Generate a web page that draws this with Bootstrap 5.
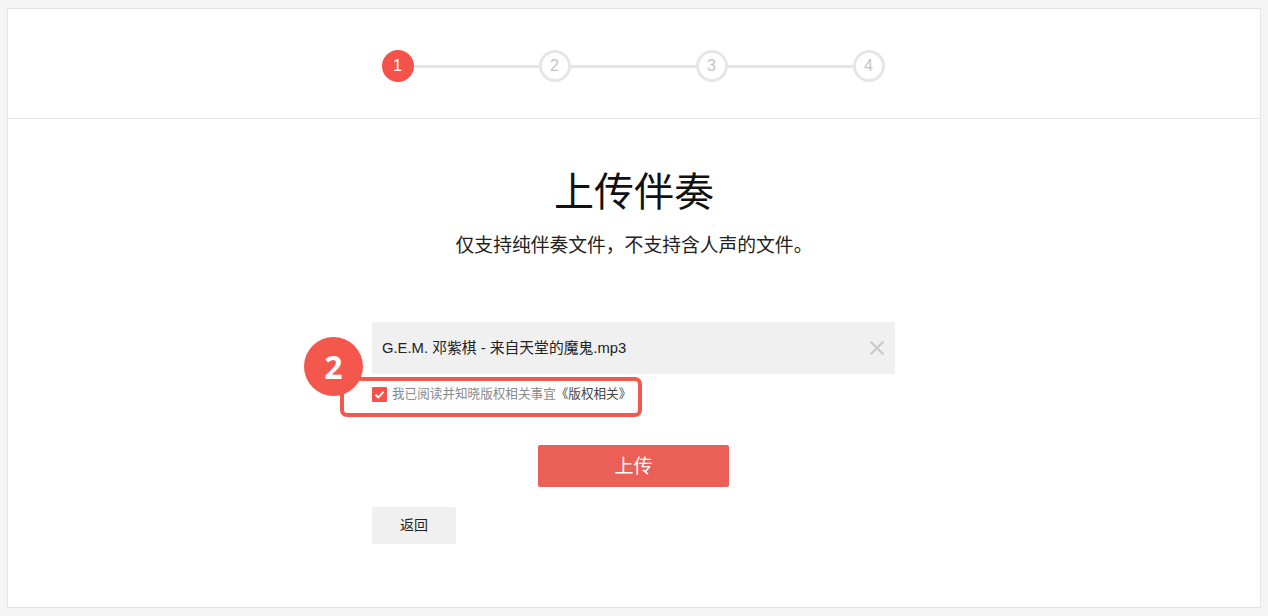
<!DOCTYPE html>
<html lang="zh">
<head>
<meta charset="utf-8">
<title>上传伴奏</title>
<link rel="stylesheet" href="https://cdn.jsdelivr.net/npm/bootstrap@5.3.0/dist/css/bootstrap.min.css">
<style>
html,body{height:100%;}
body{background:#f5f5f5;font-family:"Liberation Sans","Noto Sans CJK SC",sans-serif;color:#222;overflow:hidden;}
.shell{padding:8px 7px 8px 7px;height:616px;}
.panel{background:#fff;border:1px solid #e4e4e4;height:600px;}
.stepbar{height:110px;border-bottom:1px solid #e4e4e4;padding:41px 2px 0 0;}
.stepdot{width:32px;height:32px;border-radius:50%;border:3px solid #e6e6e6;background:#fff;color:#c4c4c4;font-size:16px;line-height:1;flex:none;}
.stepdot.on{background:#f4524a;border-color:#f4524a;color:#fff;font-weight:400;font-size:16px;}
.stepline{width:125px;height:3px;background:#e6e6e6;flex:none;}
.page-title{font-size:40px;font-weight:400;color:#111;line-height:50px;margin:0;padding-top:48px;}
.page-sub{font-size:18.8px;line-height:26px;color:#222;margin:16px 0 0;}
.formbox{width:523px;margin:63px 0 0 364px;position:relative;}
.filebar{height:52px;background:#f0f0f0;padding:0 10px;font-size:14.8px;color:#222;}
.filebar svg{flex:none;}
.agree{height:20px;margin-top:10px;font-size:12.6px;color:#8a8a8a;}
.agree b{font-weight:400;color:#444;}
.tick{width:15px;height:15px;background:#f4524a;border-radius:1px;flex:none;margin-right:1px;}
.btn-upload{display:block;width:191px;height:42px;margin:41px auto 0;background:#ea5f56;border:0;border-radius:2px;color:#fff;font-size:19px;line-height:44px;padding:0;}
.btn-upload:hover{background:#ea5f56;color:#fff;}
.btn-back{display:block;width:84px;height:37px;margin-top:20px;background:#f0f0f0;border:0;border-radius:2px;color:#222;font-size:14px;line-height:37px;padding:0;}
.btn-back:hover{background:#f0f0f0;color:#222;}
.mark-ring{position:absolute;left:-32px;top:55px;width:302px;height:40px;border:4px solid #f4574b;border-radius:7px;}
.mark-num{position:absolute;left:-68px;top:15px;width:59px;height:59px;border-radius:50%;background:#f4574b;color:#fff;font-size:32px;font-weight:700;font-family:"Open Sans","Liberation Sans",sans-serif;}
</style>
</head>
<body>
<div class="shell">
  <div class="panel">
    <div class="stepbar d-flex justify-content-center">
      <div class="d-flex align-items-center align-self-start">
        <div class="stepdot on d-flex align-items-center justify-content-center">1</div>
        <div class="stepline"></div>
        <div class="stepdot d-flex align-items-center justify-content-center">2</div>
        <div class="stepline"></div>
        <div class="stepdot d-flex align-items-center justify-content-center">3</div>
        <div class="stepline"></div>
        <div class="stepdot d-flex align-items-center justify-content-center">4</div>
      </div>
    </div>
    <div class="text-center">
      <h1 class="page-title">上传伴奏</h1>
      <p class="page-sub">仅支持纯伴奏文件，不支持含人声的文件。</p>
    </div>
    <div class="formbox">
      <div class="filebar d-flex align-items-center justify-content-between">
        <span>G.E.M. 邓紫棋 - 来自天堂的魔鬼.mp3</span>
        <svg width="16" height="16" viewBox="0 0 16 16" aria-hidden="true"><path d="M1.5 1.5l13 13M14.5 1.5l-13 13" stroke="#c9c9c9" stroke-width="2.2" fill="none"/></svg>
      </div>
      <div class="agree d-flex align-items-center gap-1">
        <span class="tick d-flex align-items-center justify-content-center">
          <svg width="11" height="11" viewBox="0 0 10 10" aria-hidden="true"><path d="M1.4 5.2l2.5 2.4 4.8-5" stroke="#fff" stroke-width="1.8" fill="none"/></svg>
        </span>
        <span>我已阅读并知晓版权相关事宜<b>《版权相关》</b></span>
      </div>
      <button type="button" class="btn btn-upload">上传</button>
      <button type="button" class="btn btn-back">返回</button>
      <div class="mark-ring"></div>
      <div class="mark-num d-flex align-items-center justify-content-center">2</div>
    </div>
  </div>
</div>
<script src="https://cdn.jsdelivr.net/npm/bootstrap@5.3.0/dist/js/bootstrap.bundle.min.js"></script>
</body>
</html>
